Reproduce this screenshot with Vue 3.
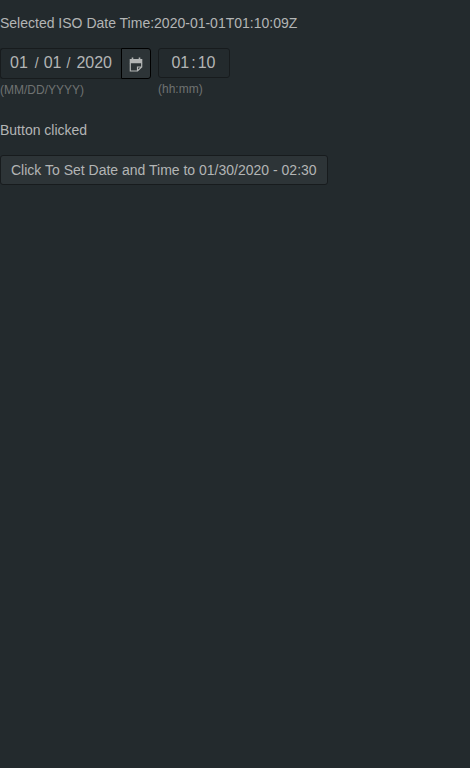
<template>
  <main class="page">
    <p class="line">Selected ISO Date Time:2020-01-01T01:10:09Z</p>
    <div class="fields">
      <div class="field">
        <div class="date">
          <div class="segments"><span class="mm">01</span><span class="slash">/</span><span class="dd">01</span><span class="slash s2">/</span><span class="yy">2020</span></div>
          <button class="cal" aria-label="Calendar">
            <svg width="14" height="15" viewBox="0 0 14 15"><path fill="#b3b5b5" d="M.7 2h2V.5h1.600V2h5.400V.5h1.600V2h2v4.200H.7z"/><path fill="none" stroke="#b3b5b5" stroke-width="1.200" d="M1.300 6v8h7.200L12.700 10V6M8.500 14v-4h4.200"/></svg>
          </button>
        </div>
        <div class="hint">(MM/DD/YYYY)</div>
      </div>
      <div class="field">
        <div class="time"><span>01</span><span class="colon">:</span><span>10</span></div>
        <div class="hint th">(hh:mm)</div>
      </div>
    </div>
    <p class="line status">Button clicked</p>
    <button class="set">Click To Set Date and Time to 01/30/2020 - 02:30</button>
  </main>
</template>

<script setup>
</script>

<style>
body { background: #232a2d; }
</style>
<style scoped>
.page { box-sizing: border-box; height: 768px; padding-top: 13px; background: #232a2d; color: #b3b5b5; font: 14px/20px "Liberation Sans", Arial, sans-serif; }
.line { margin: 0; }
.fields { display: flex; gap: 7px; margin-top: 15px; height: 72px; }
.date { display: flex; height: 31px; font-size: 16px; }
.segments { box-sizing: border-box; width: 121px; border: 1px solid #171b1d; border-right: 0; border-radius: 3px 0 0 3px; padding-left: 9px; display: flex; line-height: 28px; }
.slash { font-size: 14px; line-height: 29px; margin: 0 5px 0 7px; }
.s2 { margin-left: 5px; margin-right: 6px; }
.cal { box-sizing: border-box; width: 30px; height: 31px; border: 1px solid #000; border-radius: 0 3px 3px 0; background: #2d3437; padding: 1px 0 0; display: flex; align-items: center; justify-content: center; }
.hint { font-size: 12px; line-height: 16px; margin-top: 3px; color: #6f7272; }
.time { box-sizing: border-box; height: 30px; width: 72px; border: 1px solid #171b1d; border-radius: 3px; display: flex; padding-left: 12.4px; font-size: 16px; line-height: 28px; }
.colon { margin: 0 2px 0 2px; }
.set { display: block; box-sizing: border-box; width: 328px; height: 30px; margin-top: 15px; border: 1px solid #171b1d; border-radius: 3px; background: #2d3437; color: #b3b5b5; font: inherit; padding: 0 0 0 10px; text-align: left; }
</style>
